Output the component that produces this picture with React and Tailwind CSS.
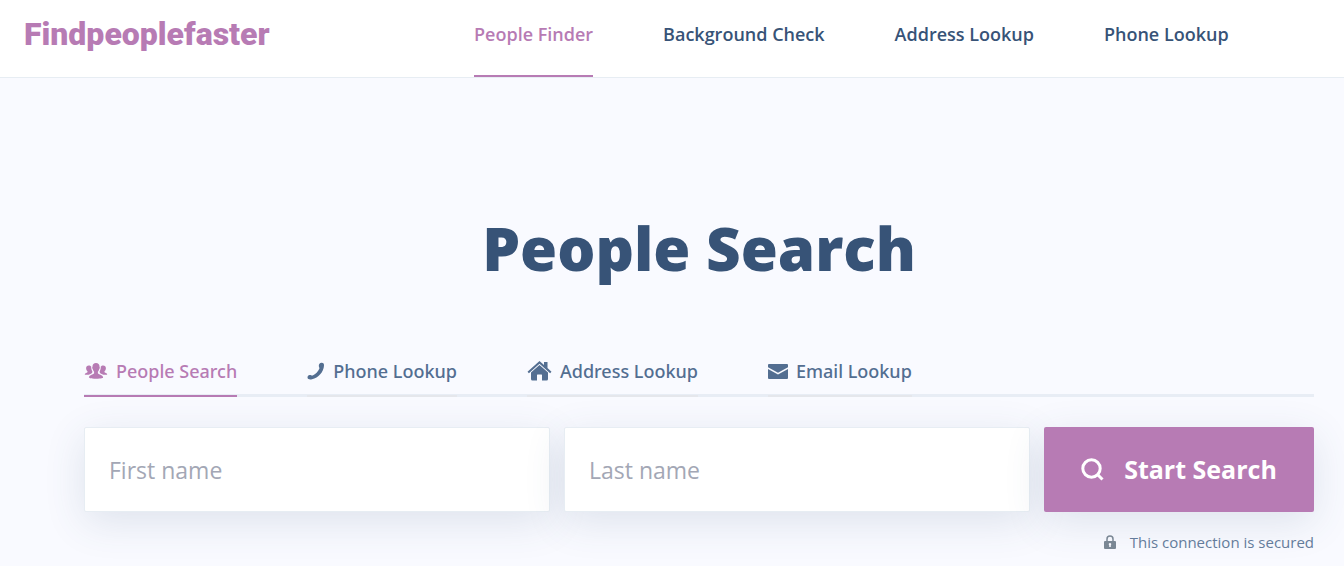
import React from 'react';

function PeopleIcon() {
  return (
    <svg className="h-4 w-6" viewBox="0 0 24 16" fill="currentColor" aria-hidden="true">
      <path d="M12 0c2.200 0 3.500 1.400 3.500 3.500 0 .5.400.8.300 1.500-.1.700-.5 1-.7 1.500-.2 1-.7 1.800-1.200 2.300v1.500c.5.900 1.800 1.200 3 1.600 1.400.5 2.100 1.200 2.200 2.600 0 .5-1.500 1.200-7.100 1.200s-7.100-.7-7.100-1.200c.1-1.400.8-2.100 2.200-2.600 1.200-.4 2.500-.7 3-1.600V8.800c-.5-.5-1-1.300-1.200-2.300-.2-.5-.6-.8-.7-1.500-.1-.7.300-1 .3-1.500C8.500 1.400 9.800 0 12 0Z" />
      <path d="M4.800 2.400c1.100 0 1.900.5 2.400 1.200 0 1.800.2 3.500 1.200 4.900 0 1.200-.5 1.800-1.400 2.200-.9.300-1.600.6-2.200 1.100H.8c0-1 .4-1.500 1.300-1.900.9-.3 1.400-.5 1.400-1V8.300C2.600 7.600 2.200 6.700 2.100 5.300 2 3.500 3.100 2.400 4.800 2.400Z" />
      <path d="M19.200 2.400c-1.100 0-1.900.5-2.400 1.200 0 1.800-.2 3.500-1.200 4.900 0 1.200.5 1.800 1.400 2.200.9.300 1.600.6 2.200 1.100h4c0-1-.4-1.500-1.300-1.900-.9-.3-1.400-.5-1.400-1V8.300c.9-.7 1.300-1.600 1.400-3 .1-1.800-1-2.900-2.700-2.900Z" />
    </svg>
  );
}

function PhoneIcon() {
  return (
    <svg className="h-[18px] w-[18px]" viewBox="0 0 18 18" fill="currentColor" aria-hidden="true">
      <path d="M14.500.8c1.800-.2 2.700 1.100 2.500 3-.4 6.400-5.600 12.100-12 13.400-2.100.4-4 .2-4.400-1.200-.5-1.600.7-2.900 2.100-3.100 1.200-.1 1.900.9 3 .5 2.900-1.200 5.400-3.700 6.600-6.600.4-1.200-.4-1.800-.5-2.900C11.700 2.400 12.800 1 14.500.8Z" />
    </svg>
  );
}

function HomeIcon() {
  return (
    <svg className="h-5 w-[25px]" viewBox="0 0 25 20" fill="currentColor" aria-hidden="true">
      <path d="m12.500 0 4.500 4V1h3.500v6.100l4 3.600-1.400 1.500L12.500 2.800 1.900 12.200.5 10.700Z" />
      <path d="m12.500 4 8.500 7.500V18q0 1.500-1.500 1.500H15V14q0-.5-.5-.5h-4q-.5 0-.5.500v5.500H5.500Q4 19.500 4 18v-6.500Z" />
    </svg>
  );
}

function MailIcon() {
  return (
    <svg className="h-[15px] w-5" viewBox="0 0 20 15" fill="currentColor" aria-hidden="true">
      <path d="M1 0h18q1 0 1 1v2.300L10 8.800 0 3.300V1q0-1 1-1ZM0 5l10 5.600L20 5v9q0 1-1 1H1q-1 0-1-1Z" />
    </svg>
  );
}

function SearchIcon() {
  return (
    <svg className="h-[23px] w-[23px]" viewBox="0 0 23 23" fill="none" stroke="currentColor" strokeWidth="3" aria-hidden="true">
      <circle cx="10.500" cy="10.500" r="8.700" />
      <path d="m16 16 5.500 5.500" />
    </svg>
  );
}

function LockIcon() {
  return (
    <svg className="h-[14px] w-3" viewBox="0 0 12 14" aria-hidden="true">
      <path d="M3 6.500V4a3 3 0 0 1 6 0v2.500" fill="none" stroke="currentColor" strokeWidth="1.500" />
      <path fill="currentColor" fillRule="evenodd" d="M1 6h10q1 0 1 1v6q0 1-1 1H1q-1 0-1-1V7q0-1 1-1Zm5 2a1.300 1.300 0 0 0-.8 2.300V12h1.600v-1.700A1.300 1.300 0 0 0 6 8Z" />
    </svg>
  );
}

const links = ['People Finder', 'Background Check', 'Address Lookup', 'Phone Lookup'];

const tabs = [
  { label: 'People Search', Icon: PeopleIcon },
  { label: 'Phone Lookup', Icon: PhoneIcon },
  { label: 'Address Lookup', Icon: HomeIcon },
  { label: 'Email Lookup', Icon: MailIcon },
];

const fields = ['First name', 'Last name'];

export default function App() {
  return (
    <div className="min-h-screen bg-[#f9faff] font-['Open_Sans',sans-serif] text-[#375377]">
      <header className="flex border-b border-[#e7edf3] bg-white pl-6">
        <a href="#home" className="w-[250px] shrink-0 pt-3 font-[Roboto,sans-serif] text-[32px] leading-11 font-black text-[#b77bb4]">
          Findpeoplefaster
        </a>
        <nav className="ml-[200px] flex gap-[70px] text-lg font-semibold whitespace-nowrap">
          {links.map((label, i) => (
            <a
              key={label}
              href="#nav"
              className={i === 0 ? 'border-b-2 border-[#b77bb4] pt-5 pb-[27px] text-[#b77bb4]' : 'border-b-2 border-transparent pt-5 pb-[27px]'}
            >
              {label}
            </a>
          ))}
        </nav>
      </header>

      <main className="pt-[130px] pr-[30px] pl-[84px]">
        <h1 className="text-center text-6xl leading-20 font-extrabold">People Search</h1>

        <div role="tablist" className="mt-[66px] flex gap-[70px] bg-[linear-gradient(#e8edf5,#e8edf5)] bg-[length:100%_3px] bg-bottom bg-no-repeat font-['Noto_Sans',sans-serif] text-lg font-medium whitespace-nowrap text-[#536e91]">
          {tabs.map(({ label, Icon }, i) => (
            <button
              key={label}
              type="button"
              role="tab"
              aria-selected={i === 0}
              className={
                i === 0
                  ? 'flex h-[43px] items-center gap-2 border-b-2 border-[#b77bb4] pb-[7px] text-[#b77bb4]'
                  : 'flex h-[43px] items-center gap-2 border-b-2 border-[#e5e7ec] pb-[7px]'
              }
            >
              <Icon />
              {label}
            </button>
          ))}
        </div>

        <form className="mt-[30px] flex gap-[14px]" onSubmit={(e) => e.preventDefault()}>
          {fields.map((label) => (
            <input
              key={label}
              type="text"
              aria-label={label}
              placeholder={label}
              className="h-[85px] min-w-0 flex-1 rounded-xs border border-[#e7edf3] bg-white px-6 text-[23px] shadow-[0_10px_40px_rgba(55,83,120,0.14)] outline-none placeholder:text-[#a3a7b5]"
            />
          ))}
          <button
            type="submit"
            className="flex h-[85px] w-[270px] shrink-0 items-center justify-center gap-5 rounded-xs bg-[#b77bb4] text-[25px] font-bold text-white shadow-[0_10px_40px_rgba(55,83,120,0.14)]"
          >
            <SearchIcon />
            Start Search
          </button>
        </form>

        <p className="mt-[18px] flex items-center justify-end gap-[14px] text-[15px] leading-6 text-[#647c9b]">
          <span className="text-[#7a8794]"><LockIcon /></span>
          This connection is secured
        </p>
      </main>
    </div>
  );
}
